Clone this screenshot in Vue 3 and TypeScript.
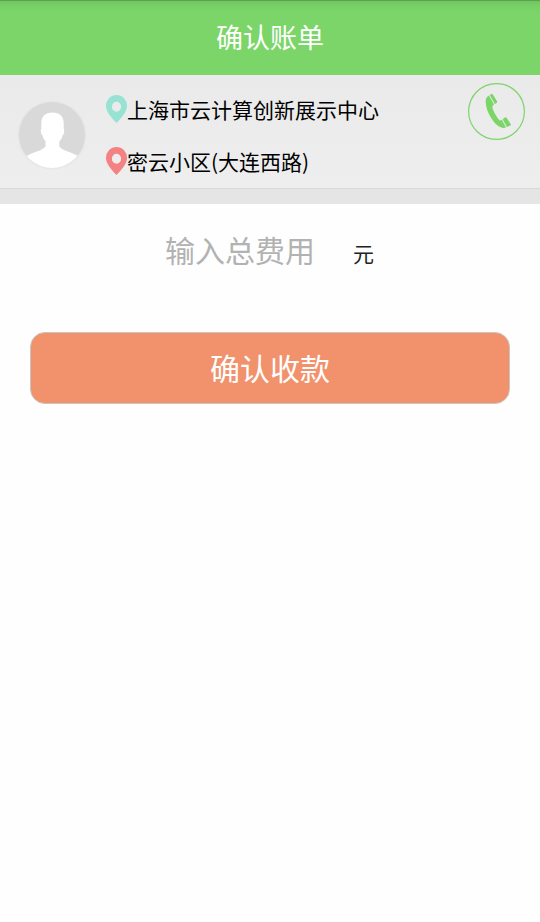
<script setup lang="ts">
import { ref } from 'vue'

interface Stop {
  kind: 'start' | 'end'
  name: string
}

const title = '确认账单'
const stops: Stop[] = [
  { kind: 'start', name: '上海市云计算创新展示中心' },
  { kind: 'end', name: '密云小区(大连西路)' },
]
const amount = ref('')
</script>

<template>
  <main class="screen">
    <header class="topbar">
      <h1>{{ title }}</h1>
    </header>

    <section class="trip">
      <svg class="avatar" viewBox="0 0 70 70" aria-hidden="true">
        <defs>
          <clipPath id="avatar-clip"><circle cx="35" cy="35" r="33" /></clipPath>
        </defs>
        <circle cx="35" cy="35" r="34.5" fill="#e7e7e7" />
        <circle cx="35" cy="35" r="33" fill="#d9d9d9" />
        <path
          clip-path="url(#avatar-clip)"
          fill="#fff"
          d="M35.500 12.500C28.500 12.500 24.300 16.500 24.300 23L24.300 29C23.300 29.500 23.800 34.500 25.500 35.500C26.200 38.500 27.500 40 28.500 41.500L28.500 46.500C25.500 51 13 52.500 8 57.500L8 70L63 70L63 57.500C57 52.500 45.500 51 42.300 46.500L42.300 41.500C44 40 45 38.500 45.500 35.500C47.200 34.500 47.700 29.500 46.700 29L46.700 23C46.700 16.500 42.500 12.500 35.500 12.500Z"
        />
      </svg>

      <ul class="stops">
        <li v-for="stop in stops" :key="stop.kind" class="stop">
          <svg class="pin" :class="stop.kind" viewBox="0 0 21 28" aria-hidden="true">
            <path
              fill-rule="evenodd"
              d="M10.500 0A10.500 10.800 0 0 0 0 11C0 16.500 4.500 21.500 10.500 28C16.500 21.500 21 16.500 21 11A10.500 10.800 0 0 0 10.500 0ZM10.500 6.800A4.600 5 0 1 1 10.500 16.800A4.600 5 0 1 1 10.500 6.800Z"
            />
          </svg>
          <span>{{ stop.name }}</span>
        </li>
      </ul>

      <button class="call" type="button" aria-label="电话">
        <svg viewBox="0 0 58 58">
          <circle cx="29.500" cy="29.500" r="27.900" fill="none" stroke="#7bd568" stroke-width="1.200" />
          <g fill="#7bd568" transform="translate(0.500 0.500)">
            <path
              d="M21.400 13.100C18.800 14.600 18 16.700 18.200 19.500C18.300 25 20.500 30.500 23.200 34.800C26.200 39.800 29.500 43.500 33.700 45C35.500 45.600 37 45.500 38.500 44.900L34.300 37.300C33.400 38 32.700 38.500 31.900 37.700C29.300 35 26.500 29.800 25.200 26.300C24.600 24.300 24.900 22.900 26.500 22.100Z"
            />
            <path
              d="M22.200 12.600L23.700 11.600Q24.700 11.100 25.300 12.100L29.500 18.800Q30 19.800 29.100 20.400L27.300 21.600ZM35.100 36.700L37.400 34.900Q38.400 34.200 39.100 35.300L43.200 41.600Q43.700 42.500 42.700 43.100L39.300 44.600Z"
            />
          </g>
        </svg>
      </button>
    </section>
    <div class="divider"></div>

    <form class="bill" @submit.prevent>
      <div class="fee">
        <input v-model="amount" type="text" placeholder="输入总费用" />
        <span class="unit">元</span>
      </div>
      <button class="confirm" type="submit">确认收款</button>
    </form>
  </main>
</template>

<style>
body {
  margin: 0;
  background: #fefefe;
}
</style>

<style scoped>
.screen {
  box-sizing: border-box;
  width: 100%;
  min-height: 922px;
  background: #fefefe;
  font-family: 'Noto Sans CJK SC', sans-serif;
}
.topbar {
  box-sizing: border-box;
  height: 75px;
  display: flex;
  align-items: center;
  justify-content: center;
  padding-bottom: 2px;
  background: linear-gradient(#5b9d4d 0, #5fa351 1px, #70c45f 1px, #76cf65 5px, #7bd568 13px);
}
h1 {
  margin: 0;
  color: #fff;
  font-size: 27px;
  line-height: 40px;
  font-weight: 400;
}
.trip {
  box-sizing: border-box;
  height: 114px;
  display: flex;
  align-items: flex-start;
  padding: 0 15px 0 17px;
  background: linear-gradient(#eaeaea, #eee);
  border-bottom: 1px solid #d9d9d9;
}
.avatar {
  width: 70px;
  height: 70px;
  margin-top: 25px;
}
.stops {
  flex: 1;
  margin: 19px 0 0 19px;
  padding: 0;
  list-style: none;
  display: flex;
  flex-direction: column;
  gap: 22px;
}
.stop {
  display: flex;
  align-items: center;
  height: 30px;
  font-size: 21px;
  line-height: 30px;
  color: #000;
  white-space: nowrap;
}
.pin {
  width: 21px;
  height: 28px;
}
.start {
  fill: #97e2d3;
}
.end {
  fill: #f48282;
}
.call {
  width: 58px;
  height: 58px;
  margin-top: 7px;
  padding: 0;
  border: 0;
  background: none;
}
.call svg {
  display: block;
  width: 58px;
  height: 58px;
}
.divider {
  height: 15px;
  background: #e5e5e5;
}
.bill {
  padding: 23px 30px 0;
}
.fee {
  display: flex;
  align-items: center;
  height: 44px;
  padding-left: 135px;
}
.fee input {
  box-sizing: border-box;
  width: 188px;
  height: 44px;
  padding: 0;
  border: 0;
  outline: 0;
  background: none;
  font: inherit;
  font-size: 30px;
  color: #222;
}
.fee input::placeholder {
  color: #b2b2b2;
  opacity: 1;
}
.unit {
  padding-top: 8px;
  font-size: 21px;
  line-height: 30px;
  color: #222;
}
.confirm {
  box-sizing: border-box;
  display: block;
  width: 100%;
  height: 72px;
  margin-top: 61px;
  padding: 0 0 2px;
  border: 1px solid #cbc5c2;
  border-radius: 15px;
  background: #f1926c;
  color: #fff;
  font: inherit;
  font-size: 30px;
}
</style>
